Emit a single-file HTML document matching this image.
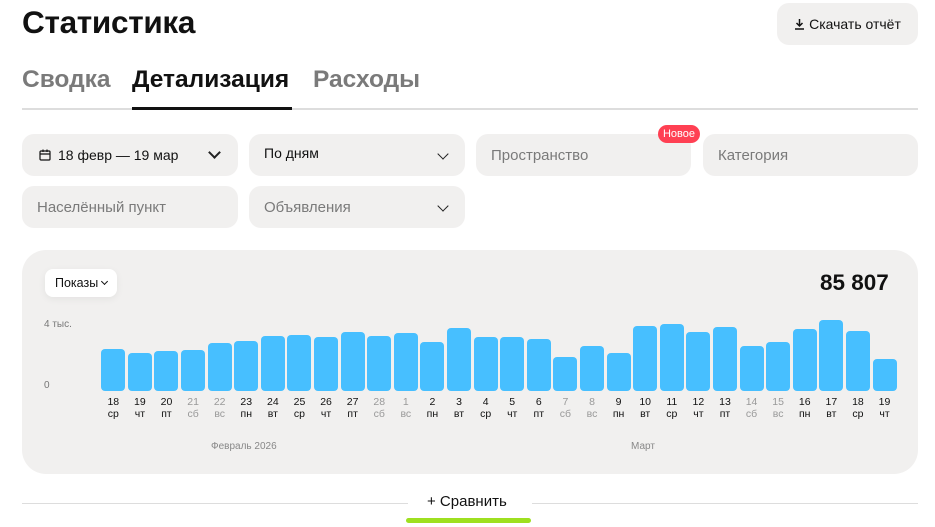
<!DOCTYPE html>
<html><head><meta charset="utf-8"><style>
*{box-sizing:border-box;margin:0;padding:0}
body{width:935px;height:527px;overflow:hidden;background:#fff;font-family:"Liberation Sans",sans-serif;color:#111;position:relative}
.a{position:absolute}
.f{position:absolute;background:#f1f0ef;border-radius:12px;height:42px;font-size:15px;display:flex;align-items:center;padding-left:15px;color:#7a7a7a}
.chev{position:absolute;right:18px;top:16px;width:8px;height:8px;border-right:1.6px solid #222;border-bottom:1.6px solid #222;transform:rotate(45deg)}
.cols{position:absolute;left:100px;top:300px;width:798px;display:flex}
.c{flex:1;display:flex;flex-direction:column;align-items:center}
.bw{height:91px;width:100%;display:flex;align-items:flex-end;justify-content:center}
.b{width:24px;background:#47bfff;border-radius:4px}
.d{font-size:10.5px;line-height:12px;margin-top:5px;text-align:center}
.g{color:#999}
</style></head><body>
<div class="a" style="left:22px;top:4px;font-size:31.5px;font-weight:bold;letter-spacing:-0.3px">Статистика</div>
<div class="a" style="left:777px;top:3px;width:141px;height:42px;background:#f1f0ef;border-radius:12px;font-size:14px;display:flex;align-items:center;justify-content:center;gap:4px">
<svg width="11" height="12" viewBox="0 0 11 12"><path d="M5.5 1v7M2.5 5l3 3 3-3M1 11h9" stroke="#111" stroke-width="1.5" fill="none"/></svg>Скачать отчёт</div>
<div class="a" style="left:22px;top:66px;font-size:24.5px;font-weight:bold;color:#7a7a7a">Сводка</div>
<div class="a" style="left:132px;top:66px;font-size:24.5px;font-weight:bold;color:#111">Детализация</div>
<div class="a" style="left:313px;top:66px;font-size:24.5px;font-weight:bold;color:#7a7a7a">Расходы</div>
<div class="a" style="left:22px;top:108px;width:896px;height:2px;background:#ddd"></div>
<div class="a" style="left:132px;top:107px;width:160px;height:3px;background:#111"></div>

<div class="f" style="left:22px;top:134px;width:216px;color:#111;font-size:14px"><svg width="12" height="12" viewBox="0 0 12 12" style="margin-right:7px;margin-left:2px"><rect x="1" y="2" width="10" height="9" rx="1" stroke="#111" stroke-width="1.2" fill="none"/><path d="M1 5h10M4 0.5v2.5M8 0.5v2.5" stroke="#111" stroke-width="1.2"/></svg>18 февр — 19 мар<span class="chev" style="right:19px;top:14px;width:9px;height:9px;border-width:2px"></span></div>
<div class="f" style="left:249px;top:134px;width:216px;color:#111;padding-bottom:4px;font-size:14px">По дням<span class="chev"></span></div>
<div class="f" style="left:476px;top:134px;width:215px">Пространство</div>
<div class="a" style="left:658px;top:125px;width:42px;height:18px;background:#ff4053;border-radius:9px;color:#fff;font-size:11px;display:flex;align-items:center;justify-content:center">Новое</div>
<div class="f" style="left:703px;top:134px;width:215px">Категория</div>
<div class="f" style="left:22px;top:186px;width:216px">Населённый пункт</div>
<div class="f" style="left:249px;top:186px;width:216px">Объявления<span class="chev"></span></div>

<div class="a" style="left:22px;top:250px;width:896px;height:224px;background:#f1f0ef;border-radius:24px"></div>
<div class="a" style="left:45px;top:269px;width:72px;height:28px;background:#fff;border-radius:8px;font-size:12.5px;display:flex;align-items:center;padding-left:10px;box-shadow:0 2px 8px rgba(0,0,0,.06)">Показы<span style="display:inline-block;width:5px;height:5px;border-right:1.3px solid #111;border-bottom:1.3px solid #111;transform:rotate(45deg);margin-left:4px;margin-top:-3px"></span></div>
<div class="a" style="left:820px;top:270px;font-size:22.5px;font-weight:bold">85 807</div>
<div class="a" style="left:44px;top:319px;font-size:10px;color:#777">4 тыс.</div>
<div class="a" style="left:44px;top:380px;font-size:10px;color:#777">0</div>
<div class="a" style="left:211px;top:441px;font-size:10px;color:#888">Февраль 2026</div>
<div class="a" style="left:631px;top:441px;font-size:10px;color:#888">Март</div>

<div class="cols">
<div class="c"><div class="bw"><div class="b" style="height:42px"></div></div><div class="d">18<br>ср</div></div>
<div class="c"><div class="bw"><div class="b" style="height:38px"></div></div><div class="d">19<br>чт</div></div>
<div class="c"><div class="bw"><div class="b" style="height:40px"></div></div><div class="d">20<br>пт</div></div>
<div class="c"><div class="bw"><div class="b" style="height:41px"></div></div><div class="d g">21<br>сб</div></div>
<div class="c"><div class="bw"><div class="b" style="height:48px"></div></div><div class="d g">22<br>вс</div></div>
<div class="c"><div class="bw"><div class="b" style="height:50px"></div></div><div class="d">23<br>пн</div></div>
<div class="c"><div class="bw"><div class="b" style="height:55px"></div></div><div class="d">24<br>вт</div></div>
<div class="c"><div class="bw"><div class="b" style="height:56px"></div></div><div class="d">25<br>ср</div></div>
<div class="c"><div class="bw"><div class="b" style="height:54px"></div></div><div class="d">26<br>чт</div></div>
<div class="c"><div class="bw"><div class="b" style="height:59px"></div></div><div class="d">27<br>пт</div></div>
<div class="c"><div class="bw"><div class="b" style="height:55px"></div></div><div class="d g">28<br>сб</div></div>
<div class="c"><div class="bw"><div class="b" style="height:58px"></div></div><div class="d g">1<br>вс</div></div>
<div class="c"><div class="bw"><div class="b" style="height:49px"></div></div><div class="d">2<br>пн</div></div>
<div class="c"><div class="bw"><div class="b" style="height:63px"></div></div><div class="d">3<br>вт</div></div>
<div class="c"><div class="bw"><div class="b" style="height:54px"></div></div><div class="d">4<br>ср</div></div>
<div class="c"><div class="bw"><div class="b" style="height:54px"></div></div><div class="d">5<br>чт</div></div>
<div class="c"><div class="bw"><div class="b" style="height:52px"></div></div><div class="d">6<br>пт</div></div>
<div class="c"><div class="bw"><div class="b" style="height:34px"></div></div><div class="d g">7<br>сб</div></div>
<div class="c"><div class="bw"><div class="b" style="height:45px"></div></div><div class="d g">8<br>вс</div></div>
<div class="c"><div class="bw"><div class="b" style="height:38px"></div></div><div class="d">9<br>пн</div></div>
<div class="c"><div class="bw"><div class="b" style="height:65px"></div></div><div class="d">10<br>вт</div></div>
<div class="c"><div class="bw"><div class="b" style="height:67px"></div></div><div class="d">11<br>ср</div></div>
<div class="c"><div class="bw"><div class="b" style="height:59px"></div></div><div class="d">12<br>чт</div></div>
<div class="c"><div class="bw"><div class="b" style="height:64px"></div></div><div class="d">13<br>пт</div></div>
<div class="c"><div class="bw"><div class="b" style="height:45px"></div></div><div class="d g">14<br>сб</div></div>
<div class="c"><div class="bw"><div class="b" style="height:49px"></div></div><div class="d g">15<br>вс</div></div>
<div class="c"><div class="bw"><div class="b" style="height:62px"></div></div><div class="d">16<br>пн</div></div>
<div class="c"><div class="bw"><div class="b" style="height:71px"></div></div><div class="d">17<br>вт</div></div>
<div class="c"><div class="bw"><div class="b" style="height:60px"></div></div><div class="d">18<br>ср</div></div>
<div class="c"><div class="bw"><div class="b" style="height:32px"></div></div><div class="d">19<br>чт</div></div>
</div>

<div class="a" style="left:22px;top:503px;width:386px;height:1px;background:#ddd"></div>
<div class="a" style="left:532px;top:503px;width:386px;height:1px;background:#ddd"></div>
<div class="a" style="left:427px;top:493px;font-size:15px">+ Сравнить</div>
<div class="a" style="left:406px;top:518px;width:125px;height:5px;background:#9ee020;border-radius:3px"></div>
</body></html>
